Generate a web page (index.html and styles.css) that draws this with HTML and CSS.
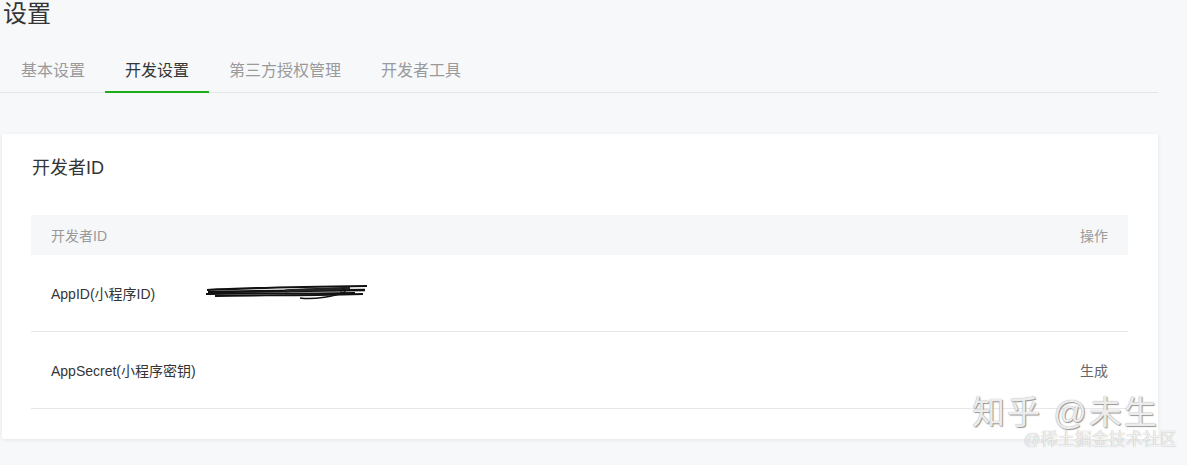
FILE: index.html
```html
<!DOCTYPE html>
<html lang="zh-CN">
<head>
    <meta charset="UTF-8">
    <meta name="viewport" content="width=device-width, initial-scale=1.0">
    <title>设置</title>
    <link rel="stylesheet" href="styles.css">
</head>
<body>
    <div class="page">
        <h1 class="page-title">设置</h1>
        <div class="tabs">
            <a class="tab">基本设置</a>
            <a class="tab active">开发设置</a>
            <a class="tab">第三方授权管理</a>
            <a class="tab">开发者工具</a>
        </div>

        <div class="card">
            <h2 class="card-title">开发者ID</h2>
            <table class="table">
                <thead>
                    <tr>
                        <th>开发者ID</th>
                        <th class="op">操作</th>
                    </tr>
                </thead>
                <tbody>
                    <tr>
                        <td>
                            <span class="label">AppID(小程序ID)</span>
                            <svg class="scribble" width="170" height="20" viewBox="0 0 170 20">
                                <path d="M2 8 C40 6 90 5 162 4" stroke="#111" stroke-width="2.2" fill="none"/>
                                <path d="M3 10 C50 9 100 9 160 8" stroke="#111" stroke-width="2.6" fill="none"/>
                                <path d="M1 12 C40 11 80 12 150 11" stroke="#111" stroke-width="2" fill="none"/>
                                <path d="M10 14 C50 13 90 14 158 12" stroke="#111" stroke-width="1.8" fill="none"/>
                                <path d="M95 16 C110 18 130 14 140 10" stroke="#111" stroke-width="1.4" fill="none"/>
                                <path d="M80 9 C100 7 120 8 145 6" stroke="#222" stroke-width="3" fill="none"/>
                                <circle cx="138" cy="9" r="2.2" stroke="#111" stroke-width="1" fill="none"/>
                            </svg>
                        </td>
                        <td class="op"></td>
                    </tr>
                    <tr>
                        <td><span class="label">AppSecret(小程序密钥)</span></td>
                        <td class="op"><a class="link">生成</a></td>
                    </tr>
                </tbody>
            </table>
        </div>
    </div>

    <div class="watermark">
        <div class="wm-main">知乎 @未生</div>
        <div class="wm-sub">@稀土掘金技术社区</div>
    </div>
</body>
</html>
```

FILE: styles.css
```css
body {
    margin: 0;
    background-color: #f7f8fa;
    color: #353535;
    font-family: "Liberation Sans", "Noto Sans CJK SC", sans-serif;
    height: 465px;
    overflow: hidden;
    position: relative;
}

.page {
    width: 1158px;
}

.page-title {
    margin: 0;
    padding-left: 3px;
    font-size: 24px;
    font-weight: normal;
    line-height: 28px;
    height: 51px;
    color: #353535;
}

.tabs {
    display: flex;
    padding-left: 1px;
    border-bottom: 1px solid #e4e5e7;
}

.tab {
    padding: 0 20px;
    height: 40px;
    line-height: 40px;
    font-size: 16px;
    color: #9a9a9a;
    cursor: pointer;
    border-bottom: 2px solid transparent;
    margin-bottom: -1px;
}

.tab.active {
    color: #353535;
    border-bottom-color: #1aad19;
}

.card {
    margin: 41px 0 0 2px;
    padding: 23px 30px 30px 29px;
    background-color: #fff;
    border-radius: 2px;
    box-shadow: 0 1px 4px rgba(0, 0, 0, 0.08);
}

.card-title {
    margin: 0 0 36px 1px;
    font-size: 18px;
    font-weight: normal;
    line-height: 22px;
    color: #353535;
}

.table {
    width: 100%;
    border-collapse: collapse;
    font-size: 14px;
}

.table th {
    height: 40px;
    padding: 0 20px;
    background-color: #f6f7f9;
    color: #9a9a9a;
    font-weight: normal;
    text-align: left;
}

.table td {
    height: 76px;
    padding: 0 20px;
    border-bottom: 1px solid #e7e7eb;
    color: #353535;
}

.table .op {
    text-align: right;
}

.label {
    display: inline-block;
    width: 150px;
    vertical-align: middle;
}

.scribble {
    vertical-align: middle;
    margin-top: -2px;
}

.link {
    color: #666;
    cursor: pointer;
}

.watermark {
    position: absolute;
    left: 972px;
    top: 396px;
    text-align: right;
    pointer-events: none;
}

.wm-main {
    font-size: 33px;
    line-height: 34px;
    letter-spacing: 2px;
    color: rgba(255, 255, 255, 0.85);
    text-shadow: 0 0 1px #888, 1px 1px 1px #999;
    white-space: nowrap;
}

.wm-sub {
    margin: 0 -18px 0 0;
    font-size: 17px;
    line-height: 20px;
    color: rgba(255, 255, 255, 0.85);
    text-shadow: 0 0 1px #999;
    white-space: nowrap;
}
```
